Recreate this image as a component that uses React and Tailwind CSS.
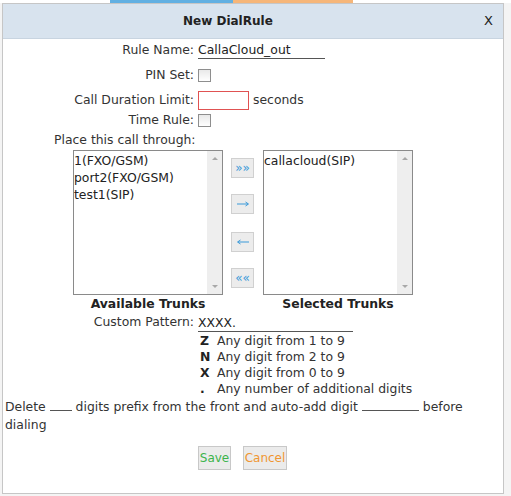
import React from 'react';

function Check() {
  return <span className="inline-block w-[13px] h-[13px] border border-[#8e8e8e] bg-gradient-to-b from-[#e9e9e9] to-white" />;
}

function Row({ label, children, className = '' }) {
  return (
    <div className={`grid grid-cols-[191px_1fr] gap-x-[4px] items-center ${className}`}>
      <div className="text-right">{label}</div>
      <div className="flex items-center">{children}</div>
    </div>
  );
}

function ListBox({ items }) {
  return (
    <div className="w-[150px] h-[145px] border border-[#8a8a8a] bg-white flex">
      <div className="flex-1 leading-[17px] pt-[1px] text-[#222]">
        {items.map((t) => <div key={t}>{t}</div>)}
      </div>
      <div className="w-[15px] bg-[#eeeeee] flex flex-col items-center justify-between py-[6px]">
        <span className="w-0 h-0 border-x-[3px] border-x-transparent border-b-[3px] border-b-[#a8a8a8]" />
        <span className="w-0 h-0 border-x-[3px] border-x-transparent border-t-[3px] border-t-[#a8a8a8]" />
      </div>
    </div>
  );
}

function MoveBtn({ children, className = '' }) {
  return (
    <div className={`w-[23px] h-[20px] bg-[#ececec] border border-[#d0d0d0] flex items-center justify-center text-[#3a9ad9] ${className}`}>
      {children}
    </div>
  );
}

const Arrow = ({ left }) => (
  <svg width="14" height="6" viewBox="0 0 14 6" className={left ? 'rotate-180' : ''}>
    <path d="M1 3H12M9.5 1L12.5 3L9.5 5" stroke="#3a9ad9" strokeWidth="1" fill="none" />
  </svg>
);

export default function App() {
  return (
    <div className="w-[511px] h-[496px] bg-[#f4f4f4] overflow-hidden font-['DejaVu_Sans',sans-serif] text-[12.4px] text-[#333]">
      <div className="flex h-[3px] bg-white">
        <div className="w-[110px]" />
        <div className="w-[123px] bg-[#62b0e2]" />
        <div className="w-[120px] bg-[#f6b679]" />
      </div>
      <div className="ml-[2px] w-[502px] h-[491px] border border-[#c6c6c6] bg-white flex flex-col">
        <div className="h-[35px] bg-[#d8e3ee] border-b border-[#c8d4e0] flex items-center shrink-0">
          <span className="ml-[180px] font-bold text-[12px] text-[#222]">New DialRule</span>
          <span className="ml-auto mr-[10px] text-[13px] text-[#222]">X</span>
        </div>

        <Row label="Rule Name:" className="mt-[1px] h-[20px]">
          <span className="w-[127px] border-b border-[#555] leading-[17px] text-[#222]">CallaCloud_out</span>
        </Row>
        <Row label="PIN Set:" className="mt-[5px] h-[20px]">
          <Check />
        </Row>
        <Row label="Call Duration Limit:" className="mt-[6px] h-[19px]">
          <span className="w-[51px] h-[19px] border border-[#e05252]" />
          <span className="ml-[4px]">seconds</span>
        </Row>
        <Row label="Time Rule:" className="h-[20px]">
          <Check />
        </Row>
        <div className="ml-[51px] h-[20px] leading-[20px]">Place this call through:</div>

        <div className="flex ml-[70px]">
          <ListBox items={['1(FXO/GSM)', 'port2(FXO/GSM)', 'test1(SIP)']} />
          <div className="ml-[8px] flex flex-col">
            <MoveBtn className="mt-[8px] text-[12px] leading-none pb-[1px]">»»</MoveBtn>
            <MoveBtn className="mt-[16px]"><Arrow /></MoveBtn>
            <MoveBtn className="mt-[18px]"><Arrow left /></MoveBtn>
            <MoveBtn className="mt-[16px] text-[12px] leading-none pb-[1px]">««</MoveBtn>
          </div>
          <div className="ml-[9px]">
            <ListBox items={['callacloud(SIP)']} />
          </div>
        </div>
        <div className="flex ml-[70px] h-[18px] leading-[18px] font-bold text-[#222]">
          <div className="w-[150px] text-center">Available Trunks</div>
          <div className="w-[40px]" />
          <div className="w-[150px] text-center">Selected Trunks</div>
        </div>

        <Row label="Custom Pattern:" className="h-[19px]">
          <span className="w-[155px] border-b border-[#555] leading-[17px] text-[#222]">XXXX.</span>
        </Row>
        <div className="ml-[197px] mt-[1px] grid grid-cols-[17px_auto] leading-[16px]">
          <b className="text-[#222]">Z</b><span>Any digit from 1 to 9</span>
          <b className="text-[#222]">N</b><span>Any digit from 2 to 9</span>
          <b className="text-[#222]">X</b><span>Any digit from 0 to 9</span>
          <b className="text-[#222]">.</b><span>Any number of additional digits</span>
        </div>
        <p className="ml-[2px] mt-[1px] leading-[18px]">
          Delete <span className="inline-block w-[22px] border-b border-[#555] h-[12px]" /> digits prefix from the front and auto-add digit{' '}
          <span className="inline-block w-[57px] border-b border-[#555] h-[12px]" /> before
          <br />
          dialing
        </p>

        <div className="mt-[12px] flex ml-[195px] gap-[12px]">
          <button className="h-[24px] w-[33px] bg-[#ebebeb] border border-[#c8c8c8] text-[#3cb44b] text-[12px] font-['DejaVu_Sans',sans-serif] p-0">Save</button>
          <button className="h-[24px] w-[44px] bg-[#ebebeb] border border-[#c8c8c8] text-[#f09632] text-[12px] font-['DejaVu_Sans',sans-serif] p-0">Cancel</button>
        </div>
      </div>
    </div>
  );
}
